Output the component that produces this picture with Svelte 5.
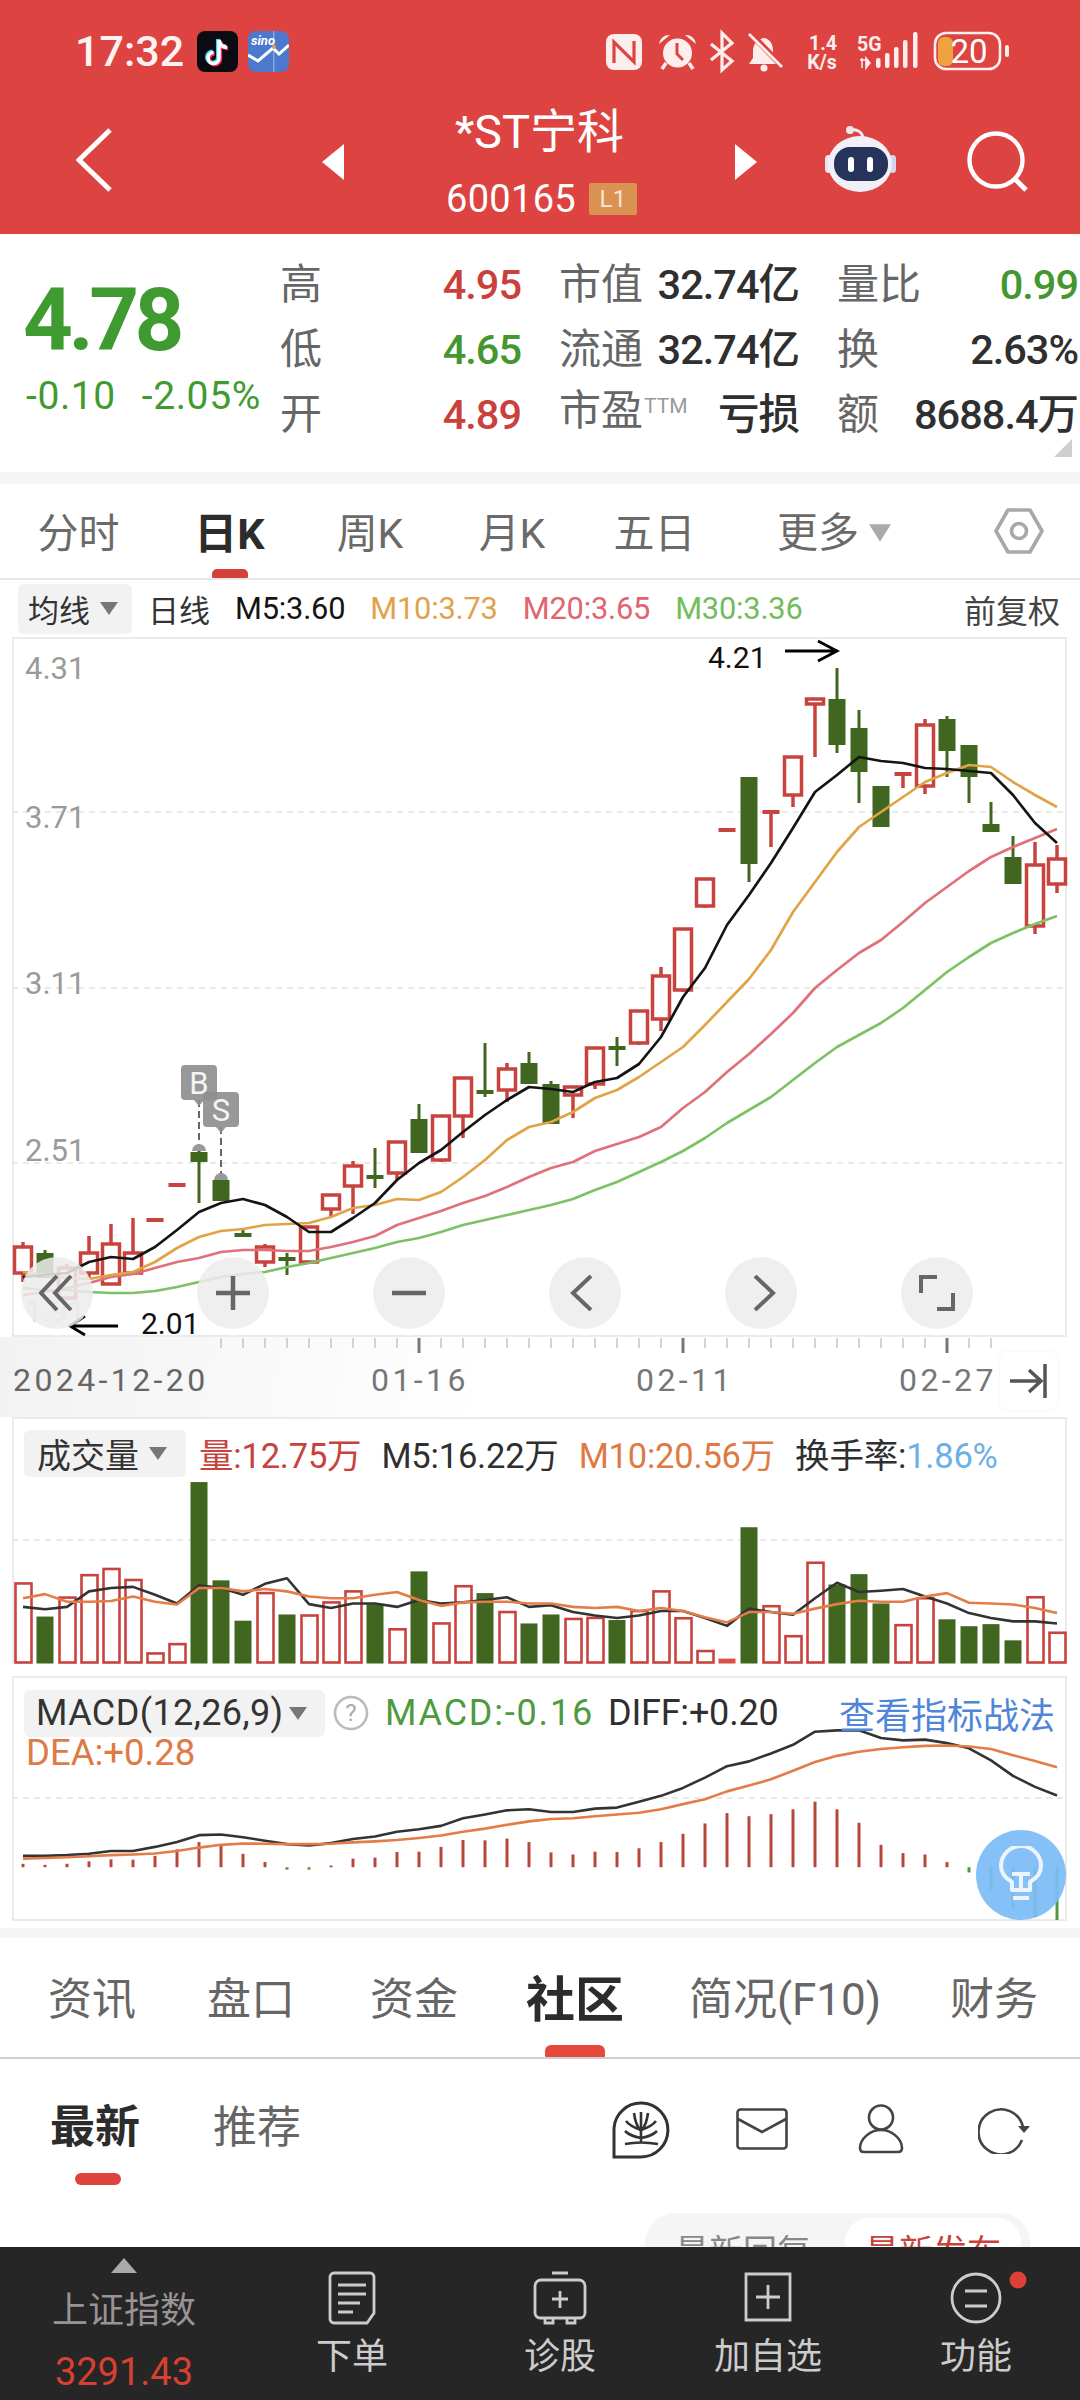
<script>
  const X = (i) => 23 + 22 * i;
  const toPts = (a, f = (y) => y) => a.map((y, i) => `${X(i)},${f(y)}`).join(' ');
  const p = (y) => 1400 + y / 2.9;

  // [colour, body top, body bottom, high, low]
  const candles = [
    ['r',1247,1273,1242,1282],['g',1253,1278,1250,1278],['r',1268,1298,1264,1300],['r',1253,1273,1236,1280],
    ['r',1244,1284,1224,1284],['r',1253,1273,1218,1273],['r',1220,1220,1220,1220],['r',1185,1185,1185,1185],
    ['g',1152,1162,1147,1203],['g',1180,1201,1173,1201],['g',1235,1235,1230,1235],['r',1247,1262,1244,1267],
    ['g',1259,1259,1253,1275],['r',1227,1262,1227,1262],['r',1195,1209,1195,1217],['r',1166,1186,1161,1214],
    ['g',1177,1177,1148,1188],['r',1142,1173,1142,1180],['g',1119,1153,1104,1153],['r',1116,1160,1116,1162],
    ['r',1078,1116,1078,1138],['g',1092,1092,1043,1097],['r',1069,1090,1063,1102],['g',1063,1084,1052,1084],
    ['g',1084,1124,1081,1124],['r',1087,1095,1086,1118],['r',1048,1084,1047,1089],['g',1048,1048,1037,1066],
    ['r',1011,1043,1011,1045],['r',976,1019,967,1031],['r',929,990,929,992],['r',879,906,879,908],
    ['r',830,830,830,830],['g',777,864,777,882],['r',812,812,812,847],['r',757,795,757,807],
    ['r',699,704,699,757],['g',699,745,668,753],['g',728,772,710,803],['g',786,827,786,827],
    ['r',774,774,774,788],['r',725,786,719,794],['g',719,751,716,777],['g',745,777,745,803],
    ['g',824,832,802,832],['g',857,884,836,884],['r',865,926,842,934],['r',859,884,845,893]
  ];
  const m5 = [1277,1275,1273,1262,1257,1259,1247,1230,1212,1203,1199,1205,1217,1232,1232,1218,1203,1180,1163,1150,1132,1115,1100,1087,1089,1092,1082,1078,1064,1037,997,968,925,895,863,828,792,775,757,761,763,768,769,771,773,795,823,843];
  const m10 = [1272,1275,1278,1279,1275,1272,1262,1248,1237,1231,1229,1225,1224,1223,1217,1208,1205,1199,1200,1192,1177,1160,1140,1127,1122,1112,1098,1090,1077,1062,1047,1025,1002,979,950,912,882,852,827,812,797,782,773,765,767,782,795,807];
  const m20 = [1295,1292,1288,1283,1277,1274,1268,1262,1258,1252,1250,1250,1251,1251,1247,1242,1236,1225,1218,1211,1203,1196,1187,1177,1168,1162,1151,1144,1137,1127,1108,1092,1072,1054,1034,1013,988,970,953,940,922,903,887,871,857,847,838,829];
  const m30 = [1288,1290,1290,1292,1293,1293,1291,1287,1282,1277,1274,1272,1267,1263,1258,1253,1248,1242,1238,1232,1225,1220,1215,1210,1205,1199,1190,1182,1172,1162,1151,1138,1123,1110,1097,1080,1063,1047,1035,1023,1008,990,972,957,943,933,924,916];

  const vol = [['r',532],['g',628],['r',573],['r',508],['r',490],['r',522],['r',735],['r',708],['g',238],['g',523],['g',640],['r',560],['g',622],['r',625],['r',587],['r',555],['g',592],['r',665],['g',497],['r',648],['r',540],['g',560],['r',615],['g',648],['g',622],['r',635],['r',632],['g',638],['r',612],['r',555],['r',633],['r',728],['f',750],['g',369],['r',598],['r',685],['r',472],['g',535],['g',505],['g',590],['r',653],['r',575],['g',636],['g',656],['g',650],['g',697],['r',572],['r',675]];
  const vk = [600,607,600,555,545,542,565,590,537,545,565,533,517,592,603,590,590,600,580,590,587,580,572,600,595,615,625,632,625,612,612,632,655,605,615,623,575,530,557,553,548,570,590,618,632,642,642,648];
  const vo = [575,563,585,585,583,570,585,593,545,545,555,548,555,570,575,575,565,557,580,597,587,585,585,590,590,600,603,600,612,603,612,630,645,615,615,620,605,592,582,585,585,570,560,588,590,593,603,618];

  const hist = [1345,1348,1345,1338,1332,1333,1322,1303,1282,1293,1316,1340,1362,1362,1350,1330,1327,1311,1310,1296,1276,1277,1272,1282,1312,1318,1310,1311,1300,1282,1258,1228,1198,1207,1201,1187,1165,1187,1226,1290,1314,1318,1340,1370,1420,1475,1500,1508];
  const diff = [1322,1322,1320,1316,1308,1308,1296,1282,1262,1260,1268,1278,1288,1292,1285,1273,1266,1252,1245,1235,1213,1202,1190,1187,1195,1195,1185,1182,1165,1148,1125,1095,1062,1048,1025,1000,962,958,958,980,987,985,995,1010,1045,1090,1122,1147];
  const dea = [1330,1328,1326,1323,1320,1318,1315,1308,1298,1290,1286,1287,1288,1288,1287,1283,1280,1276,1270,1263,1252,1243,1232,1222,1215,1213,1207,1202,1197,1187,1172,1158,1135,1118,1100,1075,1050,1032,1020,1012,1007,1003,1002,1005,1012,1030,1047,1065];

  const ticks = Array.from({ length: 36 }, (_, k) => k + 9);
  const majors = [18, 30, 42];
  const grid = [812, 988, 1163];
  const yLabels = [['4.31', 679], ['3.71', 828], ['3.11', 994], ['2.51', 1161]];
</script>

<div class="page">
  <header class="head">
    <div class="status">
      <span class="time">17:32</span>
      <svg class="app" width="41" height="41" viewBox="0 0 41 41">
        <rect width="41" height="41" rx="8" fill="#0b0b14" />
        <path d="M22 9v18a5.5 5.5 0 1 1-5.5-5.5M22 9c.5 4 3.5 7 8 7.5" fill="none" stroke="#25e0e8" stroke-width="4" transform="translate(-1 -1)" />
        <path d="M22 9v18a5.5 5.5 0 1 1-5.5-5.5M22 9c.5 4 3.5 7 8 7.5" fill="none" stroke="#fb2c5a" stroke-width="4" transform="translate(1.2 1)" />
        <path d="M22 9v18a5.5 5.5 0 1 1-5.5-5.5M22 9c.5 4 3.5 7 8 7.5" fill="none" stroke="#fff" stroke-width="3.6" />
      </svg>
      <svg class="app second" width="41" height="41" viewBox="0 0 41 41">
        <rect width="41" height="41" rx="8" fill="#4c78cd" />
        <rect x="25" width="1.5" height="41" fill="#8aa6dc" />
        <path d="M0 24l10 6 15-13 6 6 10-9" fill="none" stroke="#fff" stroke-width="3" />
        <circle cx="26" cy="16" r="2" fill="#e0a050" />
        <text x="3" y="14" class="sino">sino</text>
      </svg>
      <svg class="sys" width="440" height="60" viewBox="0 0 440 60">
        <g fill="#fdeeee">
          <rect x="16" y="14" width="36" height="36" rx="8" />
          <path d="M73 33a14.500 14.500 0 1 0 29 0a14.500 14.500 0 1 0-29 0" />
          <path d="M69 24a10 10 0 0 1 11-9zM106 24a10 10 0 0 0-11-9z" />
          <path d="M76 43l-4 6M99 43l4 6" stroke="#fdeeee" stroke-width="3.500" />
          <path d="M174 18c6 1 9 6 9 13v7l5 6h-29l4-6v-7c0-7 5-12 11-13z" />
          <circle cx="174" cy="48" r="3.500" />
        </g>
        <path d="M24 43V22l20 20V21" fill="none" stroke="#dd4441" stroke-width="3.200" />
        <path d="M87 23v11l6 6" fill="none" stroke="#dd4441" stroke-width="3" />
        <path d="M121 24l21 17-10 9V13l10 10-21 17" fill="none" stroke="#fdeeee" stroke-width="3.200" />
        <path d="M160 13l33 34" stroke="#dd4441" stroke-width="6" />
        <path d="M159 14l33 33" stroke="#fdeeee" stroke-width="2.800" />
        <text x="233" y="30" class="nk" text-anchor="middle">1.4</text>
        <text x="232" y="49" class="nk" text-anchor="middle">K/s</text>
        <text x="267" y="31" class="fg">5G</text>
        <path d="M270 40h6M272 38v10M276 38l4 5-4 5z" fill="#fdeeee" stroke="#fdeeee" stroke-width="1.500" />
        <g fill="#fdeeee">
          <rect x="286" y="38" width="4.500" height="10" rx="2" />
          <rect x="295" y="33" width="4.500" height="15" rx="2" />
          <rect x="304" y="27" width="4.500" height="21" rx="2" />
          <rect x="313" y="20" width="4.500" height="28" rx="2" />
          <rect x="323" y="12" width="4.500" height="36" rx="2" />
          <rect x="415" y="25" width="4" height="12" rx="2" />
        </g>
        <rect x="348" y="17" width="15" height="29" rx="6" fill="#eda33e" />
        <rect x="345" y="13" width="65" height="36" rx="11" fill="none" stroke="#fdeeee" stroke-width="2.600" />
        <text x="379" y="43" class="bat" text-anchor="middle">20</text>
      </svg>
    </div>

    <nav class="nav">
      <svg class="back" width="37" height="64" viewBox="0 0 37 64"><path d="M34 2L3 32l31 30" fill="none" stroke="#fff" stroke-width="5" /></svg>
      <svg class="tri-l" width="22" height="36" viewBox="0 0 22 36"><path d="M22 0v36L0 18z" fill="#fff" /></svg>
      <div class="title">
        <div class="name"><span class="star">*</span>ST宁科</div>
        <div class="code"><span>600165</span><span class="badge">L1</span></div>
      </div>
      <svg class="tri-r" width="22" height="36" viewBox="0 0 22 36"><path d="M0 0v36L22 18z" fill="#fff" /></svg>
      <svg class="robot" width="72" height="70" viewBox="824 124 72 70">
        <path d="M850 130c6-1 12 1 13 8" fill="none" stroke="#eee" stroke-width="3" />
        <circle cx="850" cy="130" r="4" fill="#f0e6ee" />
        <rect x="825" y="155" width="8" height="18" rx="4" fill="#e9e6f4" />
        <rect x="889" y="155" width="7" height="18" rx="3.500" fill="#d5d6ee" />
        <ellipse cx="860" cy="164" rx="32" ry="28" fill="#f1eff8" />
        <rect x="834" y="147" width="54" height="34" rx="16" fill="#27335a" />
        <rect x="848" y="157" width="6" height="15" rx="3" fill="#fff" />
        <rect x="867" y="157" width="6" height="15" rx="3" fill="#fff" />
      </svg>
      <svg class="search" width="62" height="62" viewBox="964 130 62 62">
        <circle cx="994" cy="160" r="26.500" fill="none" stroke="#fff" stroke-width="4.500" />
        <path d="M1013 179l11 11" stroke="#fff" stroke-width="5" />
      </svg>
    </nav>
  </header>

  <section class="quote">
    <div class="price">
      <div class="big">4.78</div>
      <div class="chg"><span>-0.10</span><span>-2.05%</span></div>
    </div>
    <div class="qgrid">
      <div class="cell first"><span class="lb">高</span><span class="v red">4.95</span></div>
      <div class="cell"><span class="lb">市值</span><span class="v dk">32.74亿</span></div>
      <div class="cell"><span class="lb">量比</span><span class="v grn">0.99</span></div>
      <div class="cell first"><span class="lb">低</span><span class="v grn">4.65</span></div>
      <div class="cell"><span class="lb">流通</span><span class="v dk">32.74亿</span></div>
      <div class="cell"><span class="lb">换</span><span class="v dk">2.63%</span></div>
      <div class="cell first"><span class="lb">开</span><span class="v red">4.89</span></div>
      <div class="cell"><span class="lb">市盈<sup class="ttm">TTM</sup></span><span class="v dk">亏损</span></div>
      <div class="cell"><span class="lb">额</span><span class="v dk">8688.4万</span></div>
    </div>
    <svg class="corner" width="18" height="18" viewBox="0 0 18 18"><path d="M18 0v18H0z" fill="#cfcfcf" /></svg>
  </section>

  <div class="gap1"></div>

  <div class="tabs">
    <span class="tab">分时</span>
    <span class="tab on">日K<i class="bar"></i></span>
    <span class="tab">周K</span>
    <span class="tab">月K</span>
    <span class="tab">五日</span>
    <span class="tab more">更多<svg width="22" height="18" viewBox="0 0 24 19"><path d="M0 0h24L12 19z" fill="#aaa" /></svg></span>
    <svg class="hex" width="50" height="46" viewBox="0 0 50 46">
      <path d="M14 2h22l12 21-12 21H14L2 23z" fill="none" stroke="#a8a8a8" stroke-width="3.600" stroke-linejoin="round" />
      <circle cx="25" cy="23" r="7.500" fill="none" stroke="#a8a8a8" stroke-width="3.600" />
    </svg>
  </div>

  <div class="legend">
    <span class="pill">均线<svg width="18" height="13" viewBox="0 0 18 13"><path d="M0 0h18L9 13z" fill="#777" /></svg></span>
    <span class="l-day">日线</span>
    <span class="l c1">M5:3.60</span>
    <span class="l c2">M10:3.73</span>
    <span class="l c3">M20:3.65</span>
    <span class="l c4">M30:3.36</span>
    <span class="l-adj">前复权</span>
  </div>

  <div class="kbox">
    <svg class="canvas" width="1055" height="700" viewBox="12 637 1055 700">
      {#each grid as y}<line x1="12" x2="1067" y1={y} y2={y} class="dash" />{/each}
      {#each yLabels as [t, y]}<text x="25" {y} class="ylab">{t}</text>{/each}
      <text x="25" y="1322" class="ylab pale">1.91</text>

      {#each candles as [c, t, b, h, l], i}
        <g class={c === 'r' ? 'up' : 'down'}>
          {#if h < t}<line x1={X(i)} x2={X(i)} y1={h} y2={t} />{/if}
          {#if l > b}<line x1={X(i)} x2={X(i)} y1={b} y2={l} />{/if}
          {#if t === b}
            <rect x={X(i) - 8.5} y={t - 2} width="17" height="4" class="solid" />
          {:else}
            <rect x={X(i) - 8.5} y={t} width="17" height={b - t} class="body" />
          {/if}
        </g>
      {/each}

      <g class="ma">
        <polyline points={toPts(m30)} stroke="#7cc264" />
        <polyline points={toPts(m20)} stroke="#e0707a" />
        <polyline points={toPts(m10)} stroke="#e0a445" />
        <polyline points={toPts(m5)} stroke="#141414" />
      </g>

      <text x="708" y="668" class="peak">4.21</text>
      <path d="M785 651h52M818 641l19 10-19 10" fill="none" stroke="#000" stroke-width="2.800" />
      <text x="141" y="1334" class="peak">2.01</text>
      <path d="M118 1326H70M85 1316l-15 10 15 9" fill="none" stroke="#000" stroke-width="2.800" />

      <g class="mark">
        <line x1="199" x2="199" y1="1100" y2="1146" stroke-dasharray="7 4" />
        <line x1="221" x2="221" y1="1127" y2="1174" stroke-dasharray="7 4" />
        <path d="M192 1151a7 7 0 0 1 14 0z" fill="#999" stroke="none" />
        <path d="M214 1180a7 7 0 0 1 14 0z" fill="#999" stroke="none" />
        <rect x="181" y="1065" width="36" height="35" rx="4" class="tag" />
        <path d="M194 1100h10l-5 6z" class="tag" />
        <text x="199" y="1094" class="tagt">B</text>
        <rect x="203" y="1092" width="36" height="35" rx="4" class="tag" />
        <path d="M216 1127h10l-5 6z" class="tag" />
        <text x="221" y="1121" class="tagt">S</text>
      </g>
    </svg>

    <div class="ctrls">
      <span class="rb"><svg width="36" height="36" viewBox="0 0 36 36"><path d="M18 1L2 18l16 17M32 1L16 18l16 17" fill="none" stroke="#666" stroke-width="4" /></svg></span>
      <span class="rb"><svg width="36" height="36" viewBox="0 0 36 36"><path d="M18 1v34M1 18h34" stroke="#666" stroke-width="4.500" /></svg></span>
      <span class="rb"><svg width="36" height="36" viewBox="0 0 36 36"><path d="M1 18h34" stroke="#666" stroke-width="4.500" /></svg></span>
      <span class="rb"><svg width="36" height="36" viewBox="0 0 36 36"><path d="M24 1L6 18l18 17" fill="none" stroke="#666" stroke-width="4" /></svg></span>
      <span class="rb"><svg width="36" height="36" viewBox="0 0 36 36"><path d="M12 1l18 17-18 17" fill="none" stroke="#666" stroke-width="4" /></svg></span>
      <span class="rb"><svg width="36" height="36" viewBox="0 0 36 36"><path d="M18 2H2v16M18 34h16V18" fill="none" stroke="#666" stroke-width="4" /></svg></span>
    </div>
  </div>

  <div class="axis">
    <svg class="ticks" width="1080" height="18" viewBox="0 1337 1080 18">
      {#each ticks as i}
        {#if majors.includes(i)}
          <line x1={X(i)} x2={X(i)} y1="1338" y2="1353" stroke="#777" stroke-width="3" />
        {:else}
          <line x1={X(i)} x2={X(i)} y1="1338" y2="1348" stroke="#c4c4c4" stroke-width="1.500" />
        {/if}
      {/each}
    </svg>
    <div class="dates">
      <span class="d0">2024-12-20</span>
      <span class="d1">01-16</span>
      <span class="d2">02-11</span>
      <span class="d3">02-27</span>
    </div>
    <span class="tolast"><svg width="40" height="34" viewBox="0 0 40 34"><path d="M1 17h30M20 6l12 11-12 11" fill="none" stroke="#555" stroke-width="3.500" /><path d="M36 0v34" stroke="#555" stroke-width="3.500" /></svg></span>
  </div>

  <div class="pane vol">
    <svg class="canvas abs" width="1055" height="247" viewBox="12 1417 1055 247">
      <line x1="12" x2="1067" y1="1540" y2="1540" class="dash" />
      {#each vol as [c, t], i}
        {#if c === 'g'}
          <rect x={X(i) - 8.5} y={p(t)} width="17" height={1663.5 - p(t)} fill="#41661f" />
        {:else if c === 'f'}
          <rect x={X(i) - 8.5} y={p(t)} width="17" height={1663.5 - p(t)} fill="#dc4f48" />
        {:else}
          <rect x={X(i) - 7.5} y={p(t)} width="16" height={1662.5 - p(t)} fill="none" stroke="#c9433e" stroke-width="2.600" />
        {/if}
      {/each}
      <g class="ma thin">
        <polyline points={toPts(vk, p)} stroke="#333" />
        <polyline points={toPts(vo, p)} stroke="#e37c47" />
      </g>
    </svg>
    <div class="vlegend">
      <span class="pill p2">成交量<svg width="18" height="13" viewBox="0 0 18 13"><path d="M0 0h18L9 13z" fill="#777" /></svg></span>
      <span class="t r">量:12.75万</span>
      <span class="t k">M5:16.22万</span>
      <span class="t o">M10:20.56万</span>
      <span class="t k">换手率:<span class="b">1.86%</span></span>
    </div>
  </div>

  <div class="pane macd">
    <svg class="canvas abs" width="1055" height="245" viewBox="12 1676 1055 245">
      <line x1="12" x2="1067" y1="1798" y2="1798" class="dash" />
      {#each hist as t, i}
        {#if t <= 1355}
          <line x1={X(i)} x2={X(i)} y1={p(t)} y2={p(1355)} stroke="#b5473d" stroke-width="3" />
        {:else}
          <line x1={X(i)} x2={X(i)} y1={p(1355)} y2={p(t)} stroke="#4f9a3e" stroke-width="3" />
        {/if}
      {/each}
      <g class="ma thin">
        <polyline points={toPts(diff, p)} stroke="#333" />
        <polyline points={toPts(dea, p)} stroke="#e37c47" />
      </g>
    </svg>
    <div class="mrow">
      <span class="pill p3">MACD(12,26,9)<svg width="18" height="13" viewBox="0 0 18 13"><path d="M0 0h18L9 13z" fill="#777" /></svg></span>
      <svg class="q" width="36" height="36" viewBox="0 0 36 36"><circle cx="18" cy="18" r="16" fill="none" stroke="#bbb" stroke-width="2.600" /><text x="18" y="26" class="qm">?</text></svg>
      <span class="t g">MACD:-0.16</span>
      <span class="t k">DIFF:+0.20</span>
      <span class="link">查看指标战法</span>
    </div>
    <div class="dea">DEA:+0.28</div>
    <span class="bulb">
      <svg width="50" height="58" viewBox="0 0 50 58">
        <path d="M16 44V36C9 32 5 26 5 20a20 20 0 0 1 40 0c0 6-4 12-11 16v8zM17 52h16" fill="none" stroke="#ecf5ff" stroke-width="4" stroke-linejoin="round" />
        <path d="M16 28h18M25 28v16" fill="none" stroke="#ecf5ff" stroke-width="4" />
      </svg>
    </span>
  </div>

  <div class="gap2"></div>

  <div class="mtabs">
    <span>资讯</span><span>盘口</span><span>资金</span>
    <span class="on">社区<i class="bar2"></i></span>
    <span>简况(F10)</span><span>财务</span>
  </div>

  <div class="sub">
    <div class="subrow">
      <span class="s on">最新<i class="bar3"></i></span>
      <span class="s reco">推荐</span>
      <span class="icons">
        <svg width="58" height="60" viewBox="0 0 58 60" fill="none" stroke="#333" stroke-width="2.600">
          <path d="M2 58V29a27 27 0 1 1 27 29z" stroke-width="3" />
          <path d="M29 13v30M13 45c10-2 22-2 33 0M22 14c1 8 3 14 7 18M36 14c-1 8-3 14-7 18M14 22c3 4 9 7 15 9M44 22c-3 4-9 7-15 9M13 32c4 4 10 6 16 7M45 32c-4 4-10 6-16 7" />
        </svg>
        <svg width="52" height="42" viewBox="0 0 52 42" fill="none" stroke="#444" stroke-width="2.600">
          <rect x="1.500" y="1.500" width="49" height="39" rx="3" />
          <path d="M2 11l24 13 24-13" />
        </svg>
        <svg width="46" height="50" viewBox="0 0 46 50" fill="none" stroke="#444" stroke-width="2.600">
          <circle cx="23" cy="13.500" r="12" />
          <path d="M23 26c-11 0-21 9-21 18 0 3 2 4 4 4h34c2 0 4-1 4-4 0-9-10-18-21-18z" />
        </svg>
        <svg width="54" height="50" viewBox="0 0 54 50" fill="none" stroke="#444" stroke-width="2.600">
          <path d="M45 23A22.500 22.500 0 1 0 44 36" />
          <path d="M40 22h12l-6 7z" fill="#444" stroke="none" />
        </svg>
      </span>
    </div>
    <div class="toggle">
      <span class="opt">最新回复</span>
      <span class="opt act">最新发布</span>
    </div>
  </div>

  <footer class="foot">
    <div class="idx">
      <svg width="26" height="15" viewBox="0 0 26 15"><path d="M13 0l13 15H0z" fill="#aaa" /></svg>
      <span class="idxn">上证指数</span>
      <span class="idxv">3291.43</span>
    </div>
    <div class="fi">
      <svg width="48" height="54" viewBox="0 0 48 54" fill="none" stroke="#ccc" stroke-width="2.800">
        <path d="M6 2h36a4 4 0 0 1 4 4v36l-7 10H6a4 4 0 0 1-4-4V6a4 4 0 0 1 4-4z" />
        <path d="M10 14h28M10 23h28M10 32h22M10 41h15" />
      </svg>
      <span>下单</span>
    </div>
    <div class="fi">
      <svg width="56" height="54" viewBox="0 0 56 54" fill="none" stroke="#ccc" stroke-width="2.800">
        <path d="M20 2h16M9 9h38a6 6 0 0 1 6 6v27a5 5 0 0 1-5 5H8a5 5 0 0 1-5-5V15a6 6 0 0 1 6-6zM13 47v5h8v-5M35 47v5h8v-5M28 20v17M20 28h16" />
      </svg>
      <span>诊股</span>
    </div>
    <div class="fi">
      <svg width="48" height="54" viewBox="0 0 48 54" fill="none" stroke="#ccc" stroke-width="2.800">
        <path d="M2 3h44v46H2zM24 14v24M12 26h24" />
      </svg>
      <span>加自选</span>
    </div>
    <div class="fi">
      <svg class="fn" width="54" height="54" viewBox="0 0 54 54" fill="none" stroke="#ccc" stroke-width="2.800">
        <circle cx="27" cy="27" r="24" />
        <path d="M16 20h22M16 35h22" />
        <circle cx="69" cy="9" r="8.500" fill="#dc4039" stroke="none" />
      </svg>
      <span>功能</span>
    </div>
  </footer>
</div>

<style>
  :global(body) { margin: 0; background: #fff; }
  .page {
    width: 1080px;
    height: 2400px;
    overflow: hidden;
    font-family: Roboto, "Noto Sans CJK SC", sans-serif;
    background: #fff;
    color: #333;
  }
  svg { display: block; flex: none; }

  /* header */
  .head { height: 234px; background: #dd4441; color: #fff; }
  .status { height: 80px; display: flex; align-items: center; position: relative; }
  .time { margin-left: 75px; margin-top: 22px; font-size: 43px; font-weight: 500; color: #fff2f2; line-height: 60px; width: 122px; }
  .app { margin-top: 23px; }
  .second { margin-left: 10px; }
  .sys { margin-left: 301px; margin-top: 20px; }
  .sino { font-size: 13px; font-style: italic; font-weight: 700; fill: #fff; }
  .nk { font-size: 19.500px; font-weight: 700; fill: #fdeeee; }
  .fg { font-size: 19.500px; font-weight: 700; fill: #fdeeee; }
  .bat { font-size: 33px; font-weight: 400; fill: #fff; }
  .nav { height: 154px; display: flex; align-items: flex-start; }
  .back { margin: 48px 0 0 76px; }
  .tri-l { margin: 64px 0 0 209px; }
  .tri-r { margin-top: 64px; }
  .title { width: 391px; text-align: center; padding-top: 26px; }
  .name { font-size: 47px; line-height: 52px; display: flex; justify-content: center; }
  .star { font-size: 42px; font-weight: 700; }
  .code { display: flex; justify-content: center; align-items: center; gap: 13px; margin-top: 22px; font-size: 38px; line-height: 38px; letter-spacing: .3px; margin-left: 4px; }
  .badge { width: 48px; height: 32px; background: #d99252; color: #f7e6d4; font-size: 24px; line-height: 32px; border-radius: 2px; text-align: center; }
  .robot { margin: 44px 0 0 67px; }
  .search { margin: 50px 0 0 70px; }

  /* quote */
  .quote { height: 238px; display: flex; position: relative; }
  .price { width: 281px; padding-left: 23px; box-sizing: border-box; color: #3f9a30; }
  .big { font-size: 87px; font-weight: 700; letter-spacing: -4.500px; line-height: 90px; margin-top: 41px; }
  .chg { display: flex; gap: 26px; font-size: 39px; letter-spacing: .6px; line-height: 40px; margin-top: 11px; margin-left: 3px; white-space: nowrap; }
  .qgrid { display: grid; grid-template-columns: 240px 278px 279px; grid-auto-rows: 65px; padding-top: 18px; margin-right: 2px; }
  .cell { display: flex; justify-content: space-between; align-items: center; padding-left: 39px; white-space: nowrap; }
  .first { padding-left: 0; }
  .lb { font-size: 42px; color: #666; line-height: 65px; margin-left: -1px; }
  .ttm { font-size: 21px; color: #999; vertical-align: baseline; position: relative; top: -12px; margin-left: 1px; }
  .v { font-size: 41.500px; letter-spacing: -1px; line-height: 65px; }
  .red { color: #c9403c; font-weight: 500; }
  .grn { color: #44962f; font-weight: 500; }
  .dk { color: #2f2f2f; font-weight: 500; }
  .corner { position: absolute; right: 8px; bottom: 15px; }
  .gap1 { height: 12px; background: #f5f5f5; }

  /* tabs */
  .tabs { height: 96px; box-sizing: border-box; border-bottom: 2px solid #e8e8e8; display: grid; grid-template-columns: 157px 145px 136px 148px 137px 168px 1fr; align-items: center; }
  .tab { position: relative; font-size: 41px; color: #6a6a6a; text-align: center; line-height: 94px; height: 94px; white-space: nowrap; padding-top: 3px; box-sizing: border-box; }
  .tab.on { color: #2c2c2c; font-weight: 700; font-size: 43px; }
  .bar { position: absolute; left: 50%; margin-left: -18px; bottom: 0; width: 36px; height: 9px; border-radius: 5px 5px 1px 1px; background: #d4403a; }
  .more { display: flex; align-items: center; gap: 10px; justify-content: flex-end; }
  .hex { margin-left: 103px; }

  .legend { height: 57px; display: flex; align-items: center; position: relative; }
  .pill { display: inline-flex; align-items: center; gap: 10px; background: #f2f2f2; border-radius: 6px; color: #333; white-space: nowrap; }
  .legend .pill { margin-left: 18px; width: 114px; height: 50px; box-sizing: border-box; padding-left: 10px; font-size: 31px; }
  .l-day { margin-left: 16px; font-size: 31px; color: #333; }
  .l { font-size: 30.800px; letter-spacing: -.2px; margin-left: 25px; white-space: nowrap; }
  .c1 { color: #141414; } .c2 { color: #e0a24a; } .c3 { color: #e0656e; } .c4 { color: #72bd5b; }
  .l-adj { margin-left: auto; margin-right: 20px; font-size: 32px; color: #444; }

  /* k chart */
  .kbox { position: relative; margin: 0 13px 0 12px; height: 700px; box-sizing: border-box; border: 2px solid #ebebeb; }
  .canvas { margin: -2px; overflow: visible; }
  .dash { stroke: #e4e4e4; stroke-width: 1.500; stroke-dasharray: 6 5; }
  .ylab { font-size: 31px; fill: #9a9a9a; }
  .pale { fill: #d4d4d4; }
  .up line { stroke: #c9433e; stroke-width: 3.500; }
  .up .body { fill: #fff; stroke: #c9433e; stroke-width: 3.500; }
  .up .solid { fill: #c9433e; }
  .down line { stroke: #41661f; stroke-width: 3; }
  .down .body, .down .solid { fill: #41661f; }
  .ma polyline { fill: none; stroke-width: 2.700; stroke-linejoin: round; }
  .thin polyline { stroke-width: 2.600; }
  .peak { font-size: 30px; fill: #111; }
  .mark line { stroke: #666; stroke-width: 2; }
  .tag { fill: #8f8f8f; fill-opacity: .92; }
  .tagt { font-size: 31px; fill: #f4f4f4; text-anchor: middle; }
  .ctrls { position: absolute; left: 7px; top: 618px; display: flex; gap: 104px; }
  .rb { width: 72px; height: 72px; border-radius: 50%; background: rgba(236, 236, 236, .86); display: flex; align-items: center; justify-content: center; }

  /* axis */
  .axis { height: 80px; position: relative; background: linear-gradient(100deg, #f2f2f2, #fff 45%); }
  .ticks { position: absolute; left: 0; top: 0; }
  .dates { position: relative; height: 80px; font-size: 32px; letter-spacing: 3.400px; color: #777; line-height: 36px; }
  .dates span { position: absolute; top: 25px; white-space: nowrap; }
  .d0 { left: 13px; color: #666; } .d1 { left: 371px; } .d2 { left: 636px; } .d3 { left: 899px; }
  .tolast { position: absolute; left: 1000px; top: 15px; width: 58px; height: 58px; background: #fff; border-radius: 8px; display: flex; align-items: center; justify-content: center; box-shadow: 0 0 4px rgba(0,0,0,.06); }

  /* panes */
  .pane { position: relative; margin: 0 13px 0 12px; box-sizing: border-box; border: 2px solid #ebebeb; }
  .abs { position: absolute; left: 0; top: 0; margin: -2px; }
  .vol { height: 247px; margin-bottom: 12px; border-bottom: 0; }
  .macd { height: 245px; }
  .vlegend, .mrow { position: relative; display: flex; align-items: center; padding: 9px 0 0 10px; white-space: nowrap; }
  .p2 { height: 47px; width: 162px; box-sizing: border-box; padding-left: 13px; font-size: 34px; }
  .p3 { height: 47px; width: 301px; box-sizing: border-box; padding-left: 12px; font-size: 36px; letter-spacing: .4px; gap: 6px; }
  .t { font-size: 34.500px; letter-spacing: -.2px; }
  .mrow .t { font-size: 36px; }
  .vlegend .r { margin-left: 13px; }
  .vlegend .k { margin-left: 20px; }
  .vlegend .o { margin-left: 20px; }
  .r { color: #c9413c; } .k { color: #2f2f2f; } .o { color: #e07a45; } .b { color: #6cb0e6; } .g { color: #4f9a3e; }
  .q { margin-left: 8px; }
  .qm { font-size: 24px; fill: #aaa; text-anchor: middle; }
  .mrow .g { margin-left: 16px; letter-spacing: 1.800px; }
  .mrow .k { margin-left: 14px; }
  .link { margin-left: auto; margin-right: 10px; font-size: 36px; color: #4f86d8; }
  .dea { position: relative; margin: -5px 0 0 12px; font-size: 36.500px; line-height: 38px; color: #e07a45; }
  .bulb { position: absolute; left: 962px; top: 152px; width: 90px; height: 90px; border-radius: 50%; background: rgba(124, 188, 245, .93); display: flex; align-items: center; justify-content: center; }

  .gap2 { height: 10px; margin-top: 7px; background: #f5f5f5; }
  .mtabs { height: 121px; box-sizing: border-box; border-bottom: 2px solid #cfcfcf; display: grid; grid-template-columns: 184px 134px 192px 130px 290px 128px; align-items: center; text-align: center; font-size: 44px; color: #666; }
  .mtabs span { position: relative; line-height: 119px; height: 119px; padding-top: 3px; box-sizing: border-box; white-space: nowrap; }
  .mtabs .on { font-size: 49px; font-weight: 700; color: #2c2c2c; }
  .bar2 { position: absolute; left: 50%; margin-left: -30px; bottom: 0; width: 60px; height: 12px; border-radius: 6px 6px 1px 1px; background: #e6483c; }

  .sub { height: 188px; overflow: hidden; }
  .subrow { height: 154px; display: flex; align-items: flex-start; }
  .s { position: relative; font-size: 44px; line-height: 60px; margin-top: 39px; color: #666; }
  .s.on { margin-left: 50px; font-size: 45px; font-weight: 700; color: #2c2c2c; }
  .reco { margin-left: 73px; }
  .bar3 { position: absolute; left: 25px; top: 75px; width: 46px; height: 12px; border-radius: 6px; background: #de433d; }
  .icons { display: flex; align-items: center; margin-left: 311px; margin-top: 39px; gap: 66px; height: 62px; }
  .icons svg:nth-child(3) { margin-left: 4px; }
  .icons svg:nth-child(4) { margin-left: 8px; }
  .toggle { display: flex; margin: 0 0 0 645px; width: 385px; height: 80px; box-sizing: border-box; background: #f5f5f5; border-radius: 30px 30px 0 0; padding: 5px 10px 0 30px; gap: 54px; }
  .opt { font-size: 34px; line-height: 48px; color: #888; padding-top: 10px; white-space: nowrap; }
  .act { color: #c9403c; background: #fff; border-radius: 24px 24px 0 0; padding: 10px 20px 0; margin-left: -20px; }

  /* footer */
  .foot { height: 153px; background: #262626; display: grid; grid-template-columns: 248px repeat(4, 208px); }
  .idx { display: flex; flex-direction: column; align-items: center; width: 248px; }
  .idx svg { margin-top: 11px; }
  .idxn { font-size: 36px; color: #9a9295; line-height: 44px; margin-top: 16px; }
  .idxv { font-size: 38px; color: #d8402f; line-height: 44px; margin-top: 17px; }
  .fi { display: flex; flex-direction: column; align-items: center; font-size: 36px; color: #ccc; }
  .fi svg { margin-top: 24px; }
  .fi .fn { overflow: visible; }
  .fi span { line-height: 44px; margin-top: 10px; }
</style>
